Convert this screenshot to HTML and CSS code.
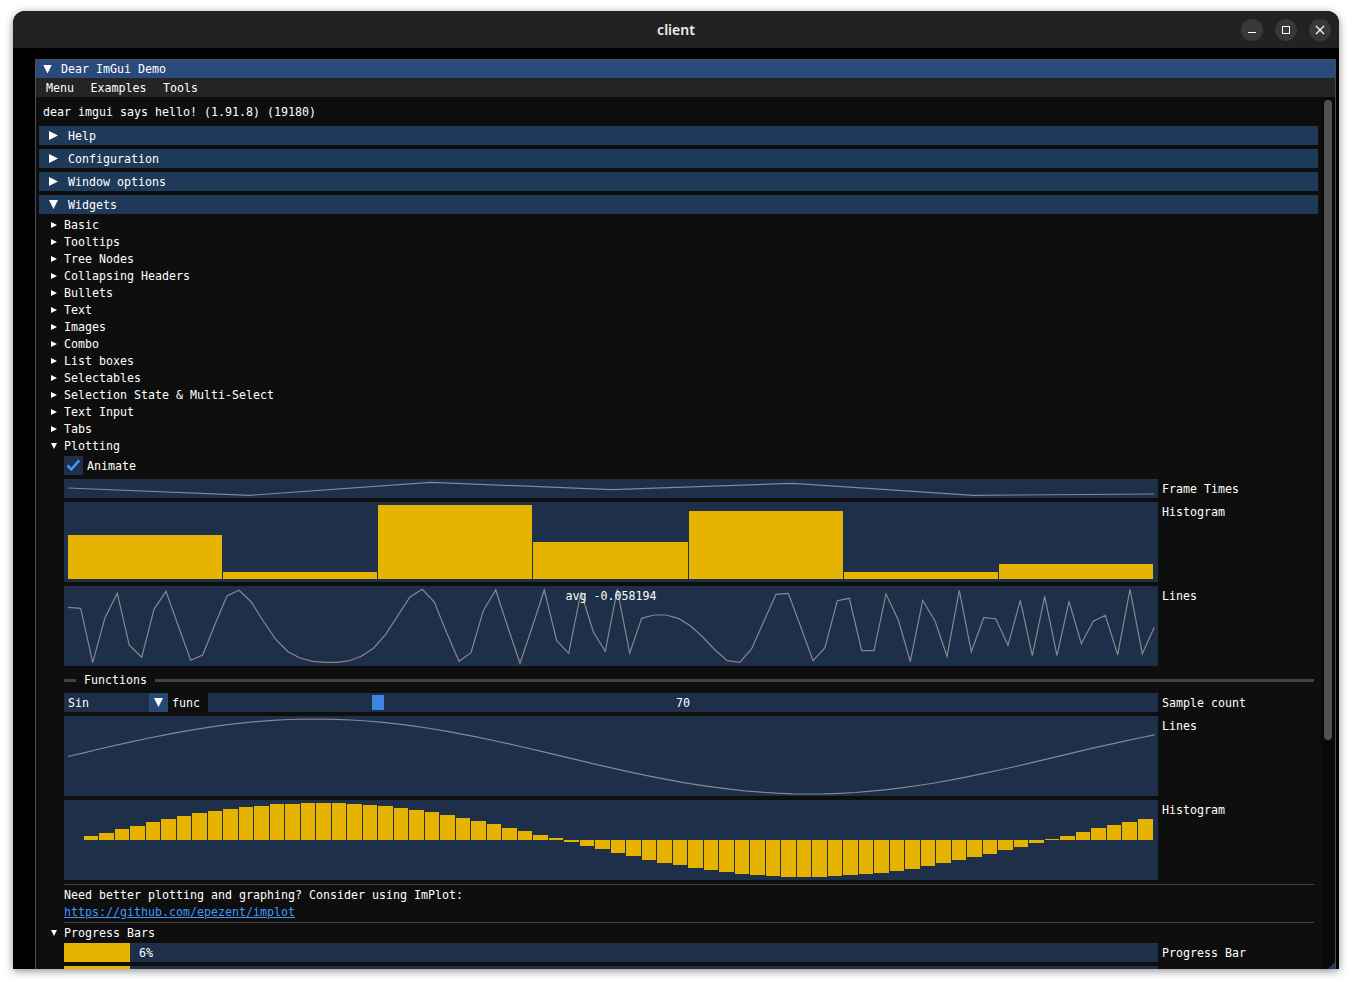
FILE: index.html
```html
<!DOCTYPE html>
<html lang="en">

<head>
    <meta charset="UTF-8">
    <title>client</title>
    <link rel="stylesheet" href="styles.css">
</head>

<body>
    <div class="app-window">
        <header class="titlebar">
            <span class="titlebar-name">client</span>
            <div class="titlebar-buttons">
                <button class="win-btn" type="button">
                    <svg width="10" height="10" viewBox="0 0 10 10"><path d="M1 7.5h8" stroke="#fff" fill="none"/></svg>
                </button>
                <button class="win-btn" type="button">
                    <svg width="10" height="10" viewBox="0 0 10 10"><path d="M1.5 1.5h7v7h-7z" stroke="#fff" fill="none"/></svg>
                </button>
                <button class="win-btn" type="button">
                    <svg width="10" height="10" viewBox="0 0 10 10"><path d="M1 1l8 8M9 1l-8 8" stroke="#fff" stroke-width="1.2" fill="none"/></svg>
                </button>
            </div>
        </header>

        <div class="canvas">
            <div class="demo">
                <div class="demo-title"><span class="tri tri-down tri-big"></span><span class="txt">Dear ImGui Demo</span></div>
                <div class="demo-menu">
                    <span class="txt">Menu</span>
                    <span class="txt">Examples</span>
                    <span class="txt">Tools</span>
                </div>

                <div class="demo-body">
                    <div class="content">
                        <div class="hello">dear imgui says hello! (1.91.8) (19180)</div>

                        <div class="section-head"><span class="tri tri-right tri-big"></span><span class="txt">Help</span></div>
                        <div class="section-head"><span class="tri tri-right tri-big"></span><span class="txt">Configuration</span></div>
                        <div class="section-head"><span class="tri tri-right tri-big"></span><span class="txt">Window options</span></div>
                        <div class="section-head"><span class="tri tri-down tri-big"></span><span class="txt">Widgets</span></div>

                        <div class="node"><span class="tri tri-right"></span><span class="txt">Basic</span></div>
                        <div class="node"><span class="tri tri-right"></span><span class="txt">Tooltips</span></div>
                        <div class="node"><span class="tri tri-right"></span><span class="txt">Tree Nodes</span></div>
                        <div class="node"><span class="tri tri-right"></span><span class="txt">Collapsing Headers</span></div>
                        <div class="node"><span class="tri tri-right"></span><span class="txt">Bullets</span></div>
                        <div class="node"><span class="tri tri-right"></span><span class="txt">Text</span></div>
                        <div class="node"><span class="tri tri-right"></span><span class="txt">Images</span></div>
                        <div class="node"><span class="tri tri-right"></span><span class="txt">Combo</span></div>
                        <div class="node"><span class="tri tri-right"></span><span class="txt">List boxes</span></div>
                        <div class="node"><span class="tri tri-right"></span><span class="txt">Selectables</span></div>
                        <div class="node"><span class="tri tri-right"></span><span class="txt">Selection State &amp; Multi-Select</span></div>
                        <div class="node"><span class="tri tri-right"></span><span class="txt">Text Input</span></div>
                        <div class="node"><span class="tri tri-right"></span><span class="txt">Tabs</span></div>
                        <div class="node"><span class="tri tri-down"></span><span class="txt">Plotting</span></div>

                        <div class="indented">
                            <div class="check-row">
                                <span class="checkbox">
                                    <svg width="19" height="19" viewBox="0 0 19 19"><path d="M3.5 9.5l3.8 3.8 8-9" stroke="#4296fa" stroke-width="2.6" fill="none"/></svg>
                                </span>
                                <span class="txt">Animate</span>
                            </div>

                            <div class="plot-row">
                                <div class="plot plot-small">
                                    <svg class="plot-svg" viewBox="64 479 1094 19">
                                        <polyline class="plot-line" points="68,488 250,495.3 431,482.3 611.7,489.7 792.5,483.3 973.3,495.3 1154.3,494"/>
                                    </svg>
                                </div>
                                <span class="plot-label">Frame Times</span>
                            </div>

                            <div class="plot-row">
                                <div class="plot">
                                    <svg class="plot-svg" viewBox="64 502 1094 80">
                                        <path class="plot-bars" d="M68 535h154v44h-154z
                                            M223 572h154v7h-154z
                                            M378 505h154v74h-154z
                                            M533 542h155v37h-155z
                                            M689 511h154v68h-154z
                                            M844 572h154v7h-154z
                                            M999 564h154v15h-154z"/>
                                    </svg>
                                </div>
                                <span class="plot-label">Histogram</span>
                            </div>

                            <div class="plot-row">
                                <div class="plot">
                                    <svg class="plot-svg" viewBox="64 586 1094 80">
                                        <polyline class="plot-line" points="68,607.3 80.7,608.3 92.7,662.7 105,617.7 117.3,593.3 129.3,645.3 141.7,657.3 154,609.3 166,591.3 178.3,626 190.7,660.3 202.7,655 215,624.3 227,596 239,590.3 251.3,602 263.3,621 275.7,639.3 288,651.7 300,658 312.7,661.3 325,662.3 337,662.3 349.3,660.7 361.3,656.3 373.7,648 385.7,634.3 398,615.3 410,597 422.3,589.3 434.3,602 446.7,632.7 459,661.3 471,652.7 483.3,610.7 495.7,590 507.7,626.7 520,663.3 532.3,626.7 544.3,590 556.7,640.7 568.7,653.3 581,592 593.3,632 605.3,651.3 617.3,589.3 629.7,653.3 641.7,618.3 654,615 666,615 678.3,618.3 690.7,626 702.7,637 715,650 727.3,660.7 739.7,662.3 751.7,648.7 764,621 776,594.3 788.3,593.3 800.7,626.7 813,660.7 825,647.7 837.3,600.7 849.3,598.3 861.7,650.7 874,650.7 886,594 898.3,620 910.3,661.7 922.7,600.3 935,621 947,656.3 959.3,590.3 971.3,651.7 983.7,617.7 995.7,618.7 1008,645.3 1020.3,600.3 1032.3,655.7 1044.7,596.3 1057,655.7 1069,601.3 1081.3,643.7 1093.3,621.3 1105.3,615.3 1117.7,654.7 1130,589.3 1142.3,653.7 1154.3,627.3"/>
                                    </svg>
                                    <span class="plot-overlay">avg -0.058194</span>
                                </div>
                                <span class="plot-label">Lines</span>
                            </div>

                            <div class="sep-text">
                                <span class="sep-stub"></span>
                                <span class="txt">Functions</span>
                                <span class="sep-fill"></span>
                            </div>

                            <div class="plot-row">
                                <div class="control-row">
                                    <div class="combo">
                                        <span class="txt combo-value">Sin</span>
                                        <span class="combo-btn"><span class="tri tri-down tri-big"></span></span>
                                    </div>
                                    <span class="txt combo-label">func</span>
                                    <div class="slider">
                                        <span class="slider-grab"></span>
                                        <span class="txt">70</span>
                                    </div>
                                </div>
                                <span class="plot-label">Sample count</span>
                            </div>

                            <div class="plot-row">
                                <div class="plot">
                                    <svg class="plot-svg" viewBox="64 716 1094 80">
                                        <polyline class="plot-line" points="68,756.5 83.75,752.8 99.5,749 115.25,745.4 131,741.9 146.75,738.5 162.5,735.3 178.25,732.3 194,729.6 209.75,727.1 225.5,724.9 241.25,723.1 257,721.6 272.75,720.4 288.5,719.5 304.25,719.1 320,719 335.75,719.3 351.5,720 367.25,721 383,722.4 398.75,724.1 414.5,726.2 430.25,728.5 446,731.2 461.75,734.1 477.5,737.2 493.25,740.5 509,743.9 524.75,747.5 540.5,751.2 556.25,754.9 572,758.7 587.75,762.4 603.5,766.1 619.25,769.7 635,773.1 650.75,776.4 666.5,779.4 682.25,782.3 698,784.9 713.75,787.2 729.5,789.2 745.25,790.9 761,792.2 776.75,793.2 792.5,793.8 808.25,794 824,793.9 839.75,793.3 855.5,792.5 871.25,791.2 887,789.6 902.75,787.7 918.5,785.5 934.25,783 950,780.2 965.75,777.2 981.5,773.9 997.25,770.5 1013,767 1028.75,763.3 1044.5,759.6 1060.25,755.9 1076,752.1 1091.75,748.4 1107.5,744.8 1123.25,741.3 1139,738 1154.75,734.8"/>
                                    </svg>
                                </div>
                                <span class="plot-label">Lines</span>
                            </div>

                            <div class="plot-row">
                                <div class="plot">
                                    <svg class="plot-svg" viewBox="64 800 1094 80">
                                        <path class="plot-bars" d="M84 836h14v4h-14z M99 833h15v7h-15z M115 829h14v11h-14z M130 826h15v14h-15z M146 822h14v18h-14z
                                            M161 819h15v21h-15z M177 816h14v24h-14z M192 813h15v27h-15z M208 811h14v29h-14z M223 809h15v31h-15z
                                            M239 807h14v33h-14z M254 806h15v34h-15z M270 804h14v36h-14z M285 804h15v36h-15z M301 803h14v37h-14z
                                            M316 803h15v37h-15z M332 803h14v37h-14z M347 804h15v36h-15z M363 805h14v35h-14z M378 806h15v34h-15z
                                            M394 808h14v32h-14z M409 810h15v30h-15z M425 812h14v28h-14z M440 815h15v25h-15z M456 818h14v22h-14z
                                            M471 821h15v19h-15z M487 824h14v16h-14z M502 828h15v12h-15z M518 831h14v9h-14z M533 835h15v5h-15z
                                            M549 838h14v2h-14z
                                            M564 840h15v2h-15z M580 840h14v6h-14z M595 840h15v9h-15z M611 840h14v13h-14z M626 840h15v16h-15z
                                            M642 840h14v20h-14z M657 840h15v23h-15z M673 840h14v25h-14z M688 840h15v28h-15z M704 840h14v30h-14z
                                            M719 840h15v32h-15z M735 840h14v34h-14z M750 840h15v35h-15z M766 840h14v36h-14z M781 840h15v37h-15z
                                            M797 840h14v37h-14z M812 840h15v37h-15z M828 840h14v36h-14z M843 840h15v35h-15z M859 840h14v34h-14z
                                            M874 840h15v33h-15z M890 840h14v31h-14z M905 840h15v29h-15z M921 840h14v26h-14z M936 840h15v23h-15z
                                            M952 840h14v20h-14z M967 840h15v17h-15z M983 840h14v14h-14z M998 840h15v10h-15z M1014 840h14v7h-14z
                                            M1029 840h15v3h-15z
                                            M1045 839h14v1h-14z M1060 836h15v4h-15z M1076 832h14v8h-14z M1091 828h15v12h-15z M1107 825h14v15h-14z
                                            M1122 822h15v18h-15z M1138 819h15v21h-15z"/>
                                    </svg>
                                </div>
                                <span class="plot-label">Histogram</span>
                            </div>

                            <div class="rule"></div>
                            <div class="line">Need better plotting and graphing? Consider using ImPlot:</div>
                            <div class="line link">https://github.com/epezent/implot</div>
                            <div class="rule"></div>
                        </div>

                        <div class="node"><span class="tri tri-down"></span><span class="txt">Progress Bars</span></div>

                        <div class="indented">
                            <div class="plot-row">
                                <div class="progress">
                                    <span class="progress-fill"></span>
                                    <span class="txt">6%</span>
                                </div>
                                <span class="plot-label">Progress Bar</span>
                            </div>
                            <div class="plot-row">
                                <div class="progress">
                                    <span class="progress-fill"></span>
                                </div>
                            </div>
                        </div>
                    </div>

                    <div class="scrollbar"><span class="scrollbar-thumb"></span></div>
                </div>
            </div>
            <span class="resize-grip"></span>
        </div>
    </div>
</body>

</html>
```

FILE: styles.css
```css
html,
body {
    margin: 0;
    height: 100%;
    overflow: hidden;
    background-color: #fff;
}

body {
    padding: 11px 13px 0;
    box-sizing: border-box;
}

.app-window {
    height: 958px;
    display: flex;
    flex-direction: column;
    border-radius: 12px 12px 0 0;
    background-color: #000;
    box-shadow: 0 2px 8px rgba(0, 0, 0, 0.45);
    overflow: hidden;
}

/* title bar */

.titlebar {
    flex: 0 0 37px;
    box-sizing: border-box;
    padding-bottom: 1px;
    position: relative;
    display: flex;
    align-items: center;
    justify-content: center;
    background-color: #222;
}

.titlebar-name {
    font-family: "Noto Sans", sans-serif;
    font-size: 14px;
    font-weight: 600;
    color: #eee;
}

.titlebar-buttons {
    position: absolute;
    right: 8px;
    top: 8px;
    display: flex;
    gap: 12px;
}

.win-btn {
    width: 22px;
    height: 22px;
    padding: 0;
    border: none;
    border-radius: 50%;
    background-color: #383838;
    display: flex;
    align-items: center;
    justify-content: center;
}

/* desktop behind the demo window */

.canvas {
    flex: 1;
    position: relative;
    padding: 11px 3px 0 22px;
    overflow: hidden;
}

.demo {
    height: 930px;
    display: flex;
    flex-direction: column;
    border: 1px solid #4b4b52;
    border-bottom: none;
    background-color: #0e0e0e;
    font-family: "DejaVu Sans Mono", monospace;
    font-size: 11.63px;
    line-height: 13px;
    color: #fff;
}

/* pushes the label text down to where the pixel font sits */
.txt {
    padding-top: 1px;
    white-space: pre;
}

.demo-title {
    flex: 0 0 18px;
    display: flex;
    align-items: center;
    gap: 9px;
    padding-left: 7px;
    background-color: #294a7a;
}

.demo-menu {
    flex: 0 0 19px;
    display: flex;
    align-items: center;
    gap: 16.5px;
    padding-left: 10px;
    background-color: #242424;
}

.demo-body {
    flex: 1;
    display: flex;
    min-height: 0;
}

.content {
    flex: 1;
    min-width: 0;
    display: flex;
    flex-direction: column;
    gap: 4px;
    padding: 8px 3px 0;
}

.hello {
    height: 13px;
    line-height: 14px;
    padding-left: 4px;
    margin-bottom: 4px;
}

/* triangles */

.tri {
    flex: none;
    display: block;
    width: 6px;
    height: 6px;
    background-color: #fff;
}

.tri-big {
    width: 9px;
    height: 9px;
}

.tri-right {
    clip-path: polygon(0 0, 100% 50%, 0 100%);
}

.tri-down {
    clip-path: polygon(0 0, 100% 0, 50% 100%);
}

/* collapsing headers and tree nodes */

.section-head {
    height: 19px;
    display: flex;
    align-items: center;
    gap: 10px;
    padding-left: 10px;
    background-color: #1f3958;
}

.node {
    height: 13px;
    display: flex;
    align-items: center;
    gap: 7px;
    padding-left: 12px;
}

.node .tri {
    margin-top: 1px;
}

.indented {
    display: flex;
    flex-direction: column;
    gap: 4px;
    padding: 0 4px 0 25px;
}

.check-row {
    height: 19px;
    display: flex;
    align-items: center;
    gap: 4px;
}

.checkbox {
    width: 19px;
    height: 19px;
    background-color: #1d2f49;
}

.checkbox svg {
    display: block;
}

/* plots */

.plot-row {
    display: flex;
    gap: 4px;
}

.plot {
    position: relative;
    flex: 0 0 1094px;
    height: 80px;
    background-color: #1d2f49;
}

.plot-small {
    height: 19px;
}

.plot-svg {
    display: block;
    width: 100%;
    height: 100%;
}

.plot-line {
    fill: none;
    stroke: #85888e;
    stroke-width: 1.2;
}

.plot-bars {
    fill: #e6b400;
    shape-rendering: crispEdges;
}

.plot-label {
    padding-top: 4px;
}

.plot-overlay {
    position: absolute;
    top: 4px;
    left: 0;
    right: 0;
    text-align: center;
}

/* separators */

.sep-text {
    height: 19px;
    display: flex;
    align-items: center;
    gap: 8px;
}

.sep-stub {
    flex: 0 0 12px;
    height: 3px;
    margin-top: 1px;
    background-color: #424248;
}

.sep-fill {
    flex: 1;
    height: 3px;
    margin-top: 1px;
    background-color: #424248;
}

.rule {
    height: 1px;
    margin-bottom: -1px;
    background-color: #424248;
}

.line {
    height: 13px;
    line-height: 14px;
}

.link {
    color: #4296fa;
    text-decoration: underline;
}

/* controls */

.control-row {
    flex: 0 0 1094px;
    height: 19px;
    display: flex;
    align-items: center;
}

.combo {
    flex: 0 0 104px;
    height: 19px;
    display: flex;
    align-items: center;
    justify-content: space-between;
    background-color: #1d2f49;
}

.combo-value {
    padding-left: 4px;
}

.combo-btn {
    width: 19px;
    height: 19px;
    display: flex;
    align-items: center;
    justify-content: center;
    background-color: #264a73;
}

.combo-label {
    padding-left: 4px;
    padding-right: 8px;
}

.slider {
    position: relative;
    flex: 1;
    height: 19px;
    display: flex;
    align-items: center;
    justify-content: center;
    background-color: #1d2f49;
}

.slider-grab {
    position: absolute;
    left: 164px;
    top: 2px;
    width: 12px;
    height: 15px;
    background-color: #3d85e0;
}

.progress {
    flex: 0 0 1094px;
    height: 19px;
    display: flex;
    align-items: center;
    gap: 9px;
    background-color: #1d2f49;
}

.progress-fill {
    width: 66px;
    height: 19px;
    background-color: #e6b400;
}

/* scrollbar and resize grip */

.scrollbar {
    flex: 0 0 14px;
    box-sizing: border-box;
    padding: 3px;
    background-color: #090909;
}

.scrollbar-thumb {
    display: block;
    width: 8px;
    height: 640px;
    border-radius: 4px;
    background-color: #515151;
}

.resize-grip {
    position: absolute;
    right: 4px;
    bottom: 0;
    width: 7px;
    height: 7px;
    background-color: #1f3958;
    clip-path: polygon(100% 0, 100% 100%, 0 100%);
}
```
